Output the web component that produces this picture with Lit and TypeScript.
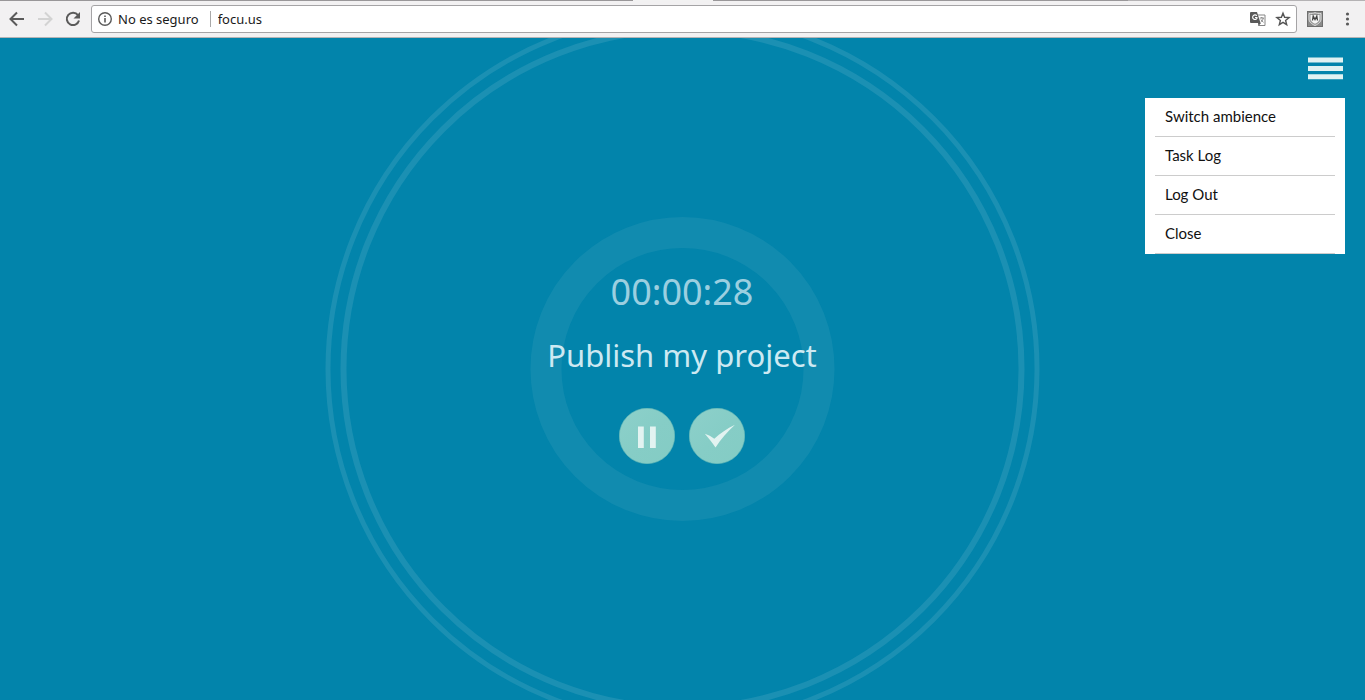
import { LitElement, html, css, svg } from "lit";
import { customElement, property, state } from "lit/decorators.js";

@customElement("browser-bar")
class BrowserBar extends LitElement {
  @property() address = "";

  static styles = css`
    :host {
      display: block;
      font: 14px/20px "Noto Sans", "Open Sans", sans-serif;
      color: #1a1a1a;
    }
    .tabs {
      display: flex;
      height: 1px;
      background: #b4b2b4;
    }
    .strip {
      flex: 633;
      background: #999799;
    }
    .active {
      flex: 80;
      background: #f2f2f2;
    }
    .strip-mid {
      flex: 415;
      background: #999799;
    }
    .strip-end {
      flex: 237;
    }
    .bar {
      display: flex;
      align-items: center;
      box-sizing: border-box;
      height: 37px;
      padding: 0 8px 0 7px;
      background: #f2f1f2;
      border-bottom: 1px solid #b5b4b5;
    }
    button {
      display: block;
      padding: 0;
      border: 0;
      background: none;
      color: inherit;
      font: inherit;
    }
    svg {
      display: block;
    }
    .nav {
      display: flex;
      gap: 8px;
    }
    .omnibox {
      flex: 1;
      display: flex;
      align-items: center;
      box-sizing: border-box;
      height: 28px;
      margin: 0 8px;
      padding: 0 5px;
      background: #fff;
      border: 1px solid #a5a4a6;
      border-radius: 3px;
    }
    .security {
      display: flex;
      align-items: center;
      gap: 5px;
      font-size: 13px;
      white-space: nowrap;
    }
    .rule {
      width: 1px;
      height: 16px;
      margin: 0 7px 0 11px;
      background: #a8a8a8;
    }
    input {
      flex: 1;
      min-width: 0;
      padding: 0;
      border: 0;
      outline: 0;
      background: none;
      color: inherit;
      font: inherit;
      font-size: 13px;
    }
    .actions {
      display: flex;
      gap: 8px;
    }
    .tools {
      display: flex;
      gap: 14px;
    }
  `;

  render() {
    return html`
      <div class="tabs">
        <span class="strip"></span><span class="active"></span>
        <span class="strip-mid"></span><span class="strip-end"></span>
      </div>
      <div class="bar">
        <div class="nav">
          <button aria-label="Back">
            <svg width="20" height="20" viewBox="0 0 20 20" fill="none" stroke="#5a5a5a" stroke-width="2"><path d="M17 10H4M10 3.5 3.5 10l6.500 6.500" /></svg>
          </button>
          <button aria-label="Forward">
            <svg width="20" height="20" viewBox="0 0 20 20" fill="none" stroke="#d3d3d3" stroke-width="2"><path d="M3 10h13M10 3.500l6.500 6.500-6.500 6.500" /></svg>
          </button>
          <button aria-label="Reload">
            <svg width="20" height="20" viewBox="0 0 20 20"><path d="M15 6.200A6.200 6.200 0 1 0 16 11.500" fill="none" stroke="#5a5a5a" stroke-width="2" /><path d="M17 3v6.500h-6.500z" fill="#5a5a5a" /></svg>
          </button>
        </div>
        <div class="omnibox">
          <button class="security">
            <svg width="16" height="16" viewBox="0 0 16 16"><circle cx="8" cy="8" r="6.300" fill="none" stroke="#5a5a5a" stroke-width="1.400" /><path d="M7.200 7h1.600v4.500H7.200zM7.200 4.400h1.600V6H7.200z" fill="#5a5a5a" /></svg>
            <span>No es seguro</span>
          </button>
          <span class="rule"></span>
          <input aria-label="Address" .value=${this.address} />
          <div class="actions">
            <button aria-label="Translate">
              <svg width="18" height="16" viewBox="0 0 18 16">
                <path d="M7 4h9v10.500H9.500" fill="#fff" stroke="#858585" />
                <path d="M2 1h6l3.500 11H2a1 1 0 0 1-1-1V2a1 1 0 0 1 1-1z" fill="#5a5a5a" />
                <path d="M7.800 4.800A2.300 2.300 0 1 0 8 7.200V6.500H6" fill="none" stroke="#fff" stroke-width="1.100" />
                <path d="M9 12h3l-2.500 3z" fill="#5a5a5a" />
                <path d="M10.800 7h4M12.800 6v1M14.300 7c-.3 1.800-1.300 3-2.500 4M12 8.500c.6 1.300 1.500 2 2.500 2.800" fill="none" stroke="#777" stroke-width=".9" />
              </svg>
            </button>
            <button aria-label="Bookmark">
              <svg width="16" height="16" viewBox="0 0 16 16"><path d="m8 2.200 1.600 4.100 4.500.3-3.500 2.800 1.100 4.300L8 11.300l-3.700 2.400 1.100-4.300-3.500-2.800 4.500-.3z" fill="none" stroke="#555" stroke-width="1.400" /></svg>
            </button>
          </div>
        </div>
        <div class="tools">
          <button aria-label="Site advisor">
            <svg width="20" height="18" viewBox="0 0 20 18">
              <rect x="2.500" y="1.500" width="15" height="15" fill="#8b8b8b" stroke="#6e6e6e" />
              <path d="M4 3.500c2.500 0 4 0 6-.8 2 .8 3.500.8 6 .8V9c0 3-2.500 5-6 6.500C6.500 14 4 12 4 9z" fill="#999" stroke="#dedede" />
              <path d="M5.500 5h9v4c0 1.800-1.500 3.500-4.500 4.800C7 12.500 5.500 10.800 5.500 9z" fill="#f5f5f5" />
              <path d="M7.500 10.500 8.200 6 10 9.500 11.800 6l.7 4.500" fill="none" stroke="#444" stroke-width="1.300" />
            </svg>
          </button>
          <button aria-label="Browser menu">
            <svg width="18" height="18" viewBox="0 0 18 18" fill="#5a5a5a"><circle cx="8.500" cy="4" r="1.600" /><circle cx="8.500" cy="9" r="1.600" /><circle cx="8.500" cy="14" r="1.600" /></svg>
          </button>
        </div>
      </div>
    `;
  }
}

@customElement("app-root")
class AppRoot extends LitElement {
  @state() private menuOpen = true;

  private items = ["Switch ambience", "Task Log", "Log Out", "Close"];

  static styles = css`
    :host {
      display: flex;
      flex-direction: column;
      min-height: 100vh;
      font-family: "Noto Sans", sans-serif;
    }
    .stage {
      position: relative;
      flex: 1;
      display: grid;
      place-items: center;
      overflow: hidden;
      background: #0284ab;
    }
    .rings {
      position: absolute;
      inset: 0;
      width: 100%;
      height: 100%;
      fill: none;
    }
    .task {
      position: relative;
      display: flex;
      flex-direction: column;
      align-items: center;
      padding: 0 1px 6px 0;
    }
    .timer {
      font-size: 36px;
      line-height: 48px;
      color: #9bcfe0;
    }
    .title {
      margin: 15px 0 29px;
      font-weight: 400;
      font-size: 31px;
      line-height: 48px;
      color: #cde9f2;
    }
    .controls {
      display: flex;
      gap: 14px;
    }
    button {
      display: block;
      padding: 0;
      border: 0;
      background: none;
      cursor: pointer;
    }
    button svg {
      display: block;
    }
    .corner {
      position: absolute;
      top: 19px;
      right: 20px;
      display: flex;
      flex-direction: column;
      align-items: flex-end;
      gap: 18px;
    }
    .burger {
      margin-right: 2px;
    }
    .menu {
      box-sizing: border-box;
      width: 200px;
      margin: 0;
      padding: 0 10px;
      list-style: none;
      background: #fff;
    }
    .menu li {
      border-bottom: 1px solid #ccc;
    }
    .menu a {
      display: block;
      padding: 0 10px 2px;
      font-family: Lato, sans-serif;
      font-size: 15px;
      line-height: 36px;
      color: #111;
      text-decoration: none;
    }
  `;

  private disc(glyph: unknown) {
    return html`<svg width="56" height="56" viewBox="0 0 56 56">
      <defs>
        <linearGradient id="g" x1="0" y1="0" x2="1" y2="1">
          <stop offset="0" stop-color="#8dd0ca" />
          <stop offset=".5" stop-color="#86cdc6" />
          <stop offset="1" stop-color="#84ccc4" />
        </linearGradient>
      </defs>
      <circle cx="28" cy="28" r="27.700" fill="url(#g)" stroke="#6fbdb8" stroke-width=".6" />
      ${glyph}
    </svg>`;
  }

  render() {
    return html`
      <browser-bar address="focu.us"></browser-bar>
      <main class="stage">
        <svg class="rings" aria-hidden="true">
          <circle cx="50%" cy="50%" r="354.500" stroke="#1b90b3" stroke-width="5" />
          <circle cx="50%" cy="50%" r="339" stroke="#1b90b3" stroke-width="6" />
          <circle cx="50%" cy="50%" r="136.500" stroke="#118baf" stroke-width="31" />
        </svg>
        <section class="task">
          <time class="timer">00:00:28</time>
          <h1 class="title">Publish my project</h1>
          <div class="controls">
            <button aria-label="Pause">
              ${this.disc(svg`<path d="M19 18.500h5.800v21.500H19zM31 18.500h5.800v21.500H31z" fill="#e2f3f1" />`)}
            </button>
            <button aria-label="Done">
              ${this.disc(svg`<path d="M15.800 25.800c3.500 1.200 6.500 2.600 9.500 5 6-5.500 12.500-10 20.700-14C38.500 23.500 32 31 26.500 39.500 23 34.500 19.500 30 15.800 25.800z" fill="#e2f3f1" />`)}
            </button>
          </div>
        </section>
        <nav class="corner">
          <button
            class="burger"
            aria-label="Menu"
            aria-expanded=${this.menuOpen}
            @click=${() => (this.menuOpen = !this.menuOpen)}
          >
            <svg width="35" height="23" viewBox="0 0 35 23" fill="#e0f2f2"><path d="M0 .5h35v5H0zM0 9h35v5H0zM0 17.300h35v5H0z" /></svg>
          </button>
          ${this.menuOpen
            ? html`<ul class="menu">
                ${this.items.map((item) => html`<li><a href="#">${item}</a></li>`)}
              </ul>`
            : ""}
        </nav>
      </main>
    `;
  }
}
